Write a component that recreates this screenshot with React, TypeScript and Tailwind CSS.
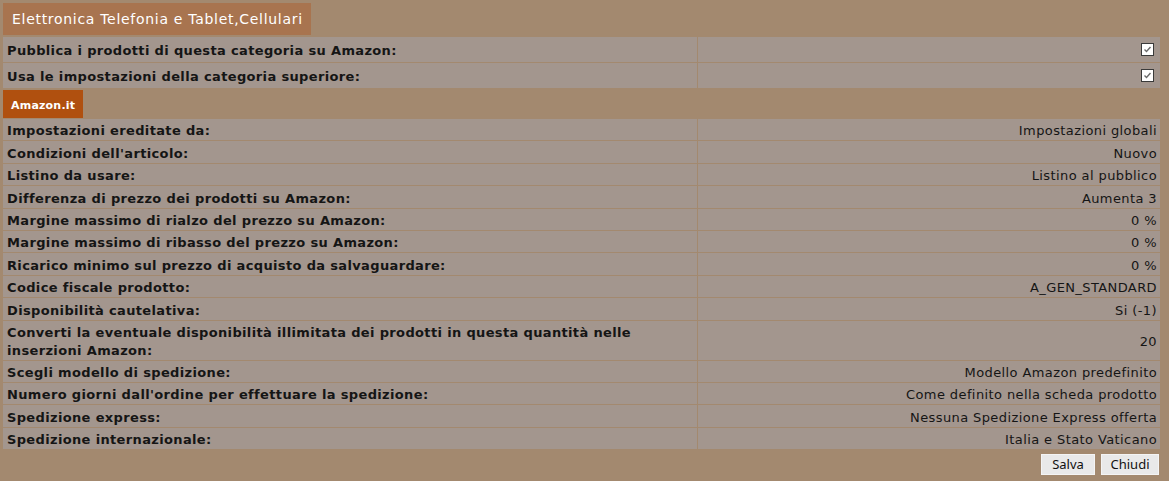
import React from "react";

const rows: { label: string; value: string; double?: boolean }[] = [
  { label: "Impostazioni ereditate da:", value: "Impostazioni globali" },
  { label: "Condizioni dell'articolo:", value: "Nuovo" },
  { label: "Listino da usare:", value: "Listino al pubblico" },
  { label: "Differenza di prezzo dei prodotti su Amazon:", value: "Aumenta 3" },
  { label: "Margine massimo di rialzo del prezzo su Amazon:", value: "0 %" },
  { label: "Margine massimo di ribasso del prezzo su Amazon:", value: "0 %" },
  { label: "Ricarico minimo sul prezzo di acquisto da salvaguardare:", value: "0 %" },
  { label: "Codice fiscale prodotto:", value: "A_GEN_STANDARD" },
  { label: "Disponibilità cautelativa:", value: "Si (-1)" },
  {
    label:
      "Converti la eventuale disponibilità illimitata dei prodotti in questa quantità nelle inserzioni Amazon:",
    value: "20",
    double: true,
  },
  { label: "Scegli modello di spedizione:", value: "Modello Amazon predefinito" },
  { label: "Numero giorni dall'ordine per effettuare la spedizione:", value: "Come definito nella scheda prodotto" },
  { label: "Spedizione express:", value: "Nessuna Spedizione Express offerta" },
  { label: "Spedizione internazionale:", value: "Italia e Stato Vaticano" },
];

function Check() {
  return (
    <span className="inline-flex h-[13px] w-[13px] items-center justify-center border border-[#3a3a3a] bg-white">
      <svg width="11" height="11" viewBox="0 0 11 11">
        <path d="M2.5 5.5 L4.5 7.5 L8.5 3" fill="none" stroke="#6b6b6b" strokeWidth="1.4" />
      </svg>
    </span>
  );
}

export default function App() {
  return (
    <div
      className="h-[481px] w-[1169px] bg-[#a3896f] text-[#151515]"
      style={{ fontFamily: "'DejaVu Sans', Verdana, sans-serif" }}
    >
      <div className="ml-[3px] w-[1157px] pt-[3px]">
        <div className="flex h-[32px] w-[308px] items-center bg-[#a8744f] pl-[9px] pt-[1px] text-[14px] tracking-[0.7px] text-white">
          Elettronica Telefonia e Tablet,Cellulari
        </div>

        <div className="mt-[2px] grid grid-cols-[694px_462px] gap-[1px] text-[13px] font-bold tracking-[0.35px]">
          <div className="flex h-[25px] items-center bg-[#a3968e] pl-[4px] pt-[3px]">
            Pubblica i prodotti di questa categoria su Amazon:
          </div>
          <div className="flex h-[25px] items-center justify-end bg-[#a3968e] pr-[6px]">
            <Check />
          </div>
          <div className="flex h-[25px] items-center bg-[#a3968e] pl-[4px] pt-[3px]">
            Usa le impostazioni della categoria superiore:
          </div>
          <div className="flex h-[25px] items-center justify-end bg-[#a3968e] pr-[6px]">
            <Check />
          </div>
        </div>

        <div className="flex h-[31px] items-center">
          <div className="flex h-[28px] w-[80px] items-center bg-[#b0500f] pl-[8px] pt-[5px] text-[11px] font-bold tracking-[0.2px] text-white">
            Amazon.it
          </div>
        </div>

        <div className="grid grid-cols-[694px_462px] gap-[1px] text-[13px] leading-[17.6px]">
          {rows.map((r) => (
            <React.Fragment key={r.label}>
              <div
                className={`flex items-center bg-[#a3968e] pl-[4px] pr-[40px] pt-[3px] font-bold tracking-[0.35px] ${
                  r.double ? "h-[39px]" : "h-[21.4px]"
                }`}
              >
                {r.label}
              </div>
              <div
                className={`flex items-center justify-end bg-[#a3968e] pr-[3px] pt-[3px] tracking-[0.4px] ${
                  r.double ? "h-[39px]" : "h-[21.4px]"
                }`}
              >
                {r.value}
              </div>
            </React.Fragment>
          ))}
        </div>

        <div
          className="mt-[5px] flex justify-end gap-[6px] pr-[1px] text-[13px]"
          style={{ fontFamily: "'Noto Sans', 'Open Sans', sans-serif" }}
        >
          <button className="h-[21px] w-[54px] border border-[#f4f4f4] bg-[#e9e9e9] leading-none text-[#111]">
            Salva
          </button>
          <button className="h-[21px] w-[58px] border border-[#f4f4f4] bg-[#e9e9e9] leading-none text-[#111]">
            Chiudi
          </button>
        </div>
      </div>
    </div>
  );
}
